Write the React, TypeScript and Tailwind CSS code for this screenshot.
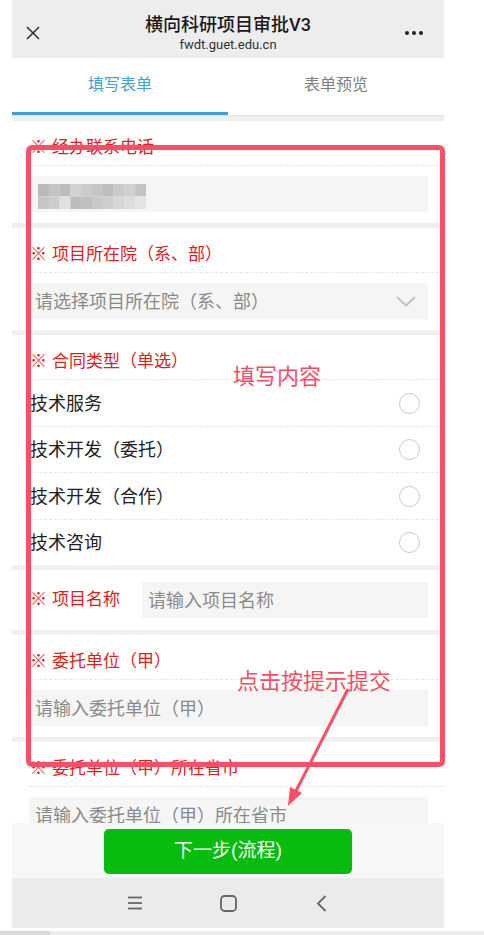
import React from "react";

const FONT = "font-['Roboto','Noto_Sans_CJK_SC',sans-serif]";

function Label({ children }: { children: React.ReactNode }) {
  return (
    <div className="pl-[18px] h-[44px] pt-[9px] leading-[34px] text-[17px] text-[#d5231d]">
      <span className="mr-[5px]">※</span>
      {children}
    </div>
  );
}

function InputBox({ placeholder, children, chevron }: { placeholder?: string; children?: React.ReactNode; chevron?: boolean }) {
  return (
    <div className="relative h-[36px] bg-[#f5f5f5] flex items-center pl-[6px] text-[18px] text-[#8a8a8a]">
      {placeholder}
      {children}
      {chevron && (
        <svg className="absolute right-[12px] top-[13px]" width="20" height="11" viewBox="0 0 20 11">
          <polyline points="1,1 10,9.5 19,1" fill="none" stroke="#c2c2c2" strokeWidth="2" />
        </svg>
      )}
    </div>
  );
}

function Section({ label, placeholder, chevron, children }: { label: string; placeholder?: string; chevron?: boolean; children?: React.ReactNode }) {
  return (
    <div className="bg-white">
      <Label>{label}</Label>
      <div className="ml-[17px] border-t border-dashed border-[#e8e8e8] pt-[10px] pb-[11px] pr-[16px]">
        <InputBox placeholder={placeholder} chevron={chevron}>
          {children}
        </InputBox>
      </div>
    </div>
  );
}

function Pixelated() {
  const r1 = ["#b9b9b9", "#c4c4c4", "#bcbcbc", "#d2d2d2", "#cbcbcb", "#c5c5c5", "#bdbdbd", "#cacaca", "#d0d0d0", "#c3c3c3"];
  const r2 = ["#c6c6c6", "#cdcdcd", "#e0e0e0", "#bcbcbc", "#c0c0c0", "#c8c8c8", "#cecece", "#d6d6d6", "#dcdcdc", "#e4e4e4"];
  return (
    <svg className="absolute left-[9px] top-[8px]" width="108" height="25" viewBox="0 0 108 25">
      {r1.map((c, i) => (
        <rect key={"a" + i} x={i * 10.8} y={0} width={10.9} height={12.5} fill={c} />
      ))}
      {r2.map((c, i) => (
        <rect key={"b" + i} x={i * 10.8} y={12.5} width={10.9} height={12.5} fill={c} />
      ))}
    </svg>
  );
}

function OptionRow({ text, short }: { text: string; short?: boolean }) {
  return (
    <div
      className={
        short
          ? "ml-[17px] border-t border-dashed border-[#e8e8e8] h-[46px] flex items-center justify-between pl-[1px] pr-[24px]"
          : "ml-[17px] border-t border-dashed border-[#e8e8e8] h-[47px] flex items-center justify-between pl-[1px] pr-[24px]"
      }
    >
      <span className="text-[18px] text-[#1f1f1f]">{text}</span>
      <span className="w-[21px] h-[21px] rounded-full border border-[#c8c8c8] bg-white" />
    </div>
  );
}

export default function App() {
  return (
    <div className={`relative w-[484px] h-[935px] bg-white overflow-hidden ${FONT}`}>
      <div className="ml-[12px] w-[432px] h-[928px] flex flex-col">
        {/* Header */}
        <div className="h-[58px] bg-[#ededed] flex shrink-0">
          <div className="w-[60px] pl-[14px] pt-[26px]">
            <svg width="14" height="14" viewBox="0 0 14 14">
              <line x1="1" y1="1" x2="13" y2="13" stroke="#333" strokeWidth="1.6" />
              <line x1="13" y1="1" x2="1" y2="13" stroke="#333" strokeWidth="1.6" />
            </svg>
          </div>
          <div className="flex-1 flex flex-col items-center pt-[13px]">
            <div className="text-[18px] leading-[24px] font-medium text-[#1a1a1a]">横向科研项目审批V3</div>
            <div className="text-[13px] leading-[16px] text-[#333]">fwdt.guet.edu.cn</div>
          </div>
          <div className="w-[60px] flex justify-end pr-[20px] pt-[30px]">
            <svg width="20" height="6" viewBox="0 0 20 6">
              <circle cx="3" cy="3" r="2" fill="#222" />
              <circle cx="10" cy="3" r="2" fill="#222" />
              <circle cx="17" cy="3" r="2" fill="#222" />
            </svg>
          </div>
        </div>

        {/* Tabs */}
        <div className="bg-white shrink-0">
          <div className="h-[54px] flex">
            <div className="flex-1 flex items-center justify-center text-[16px] text-[#3ea4d8]">填写表单</div>
            <div className="flex-1 flex items-center justify-center text-[16px] text-[#7d7d7d]">表单预览</div>
          </div>
          <div className="h-[3px] flex">
            <div className="w-1/2 bg-[#3c9fda]" />
          </div>
          <div className="h-[1px] bg-[#e3e3e3]" />
        </div>

        {/* Content */}
        <div className="h-[707px] overflow-hidden bg-[#efeff4] pt-[5px] flex flex-col gap-[5px] shrink-0">
          <Section label="经办联系电话">
            <Pixelated />
          </Section>
          <Section label="项目所在院（系、部）" placeholder="请选择项目所在院（系、部）" chevron />
          <div className="bg-white">
            <Label>合同类型（单选）</Label>
            <OptionRow text="技术服务" />
            <OptionRow text="技术开发（委托）" short />
            <OptionRow text="技术开发（合作）" />
            <OptionRow text="技术咨询" short />
          </div>
          <div className="bg-white flex items-center py-[12px] pr-[16px]">
            <div className="w-[130px] pl-[18px] text-[17px] text-[#d5231d]">
              <span className="mr-[5px]">※</span>项目名称
            </div>
            <div className="flex-1">
              <InputBox placeholder="请输入项目名称" />
            </div>
          </div>
          <Section label="委托单位（甲）" placeholder="请输入委托单位（甲）" />
          <Section label="委托单位（甲）所在省市" placeholder="请输入委托单位（甲）所在省市" />
        </div>

        {/* Button bar */}
        <div className="h-[55px] bg-[#f7f7f7] flex justify-center pt-[6px] shrink-0">
          <div className="w-[248px] h-[45px] rounded-[5px] bg-[#07bc0c] flex items-center justify-center text-white text-[19px]">
            下一步(流程)
          </div>
        </div>

        {/* Nav bar */}
        <div className="h-[50px] bg-[#ebebeb] flex justify-center items-center shrink-0">
          <div className="w-[93px] flex justify-center">
            <svg width="16" height="14" viewBox="0 0 16 14">
              <line x1="1" y1="1.5" x2="15" y2="1.5" stroke="#666" strokeWidth="1.8" />
              <line x1="1" y1="7" x2="15" y2="7" stroke="#666" strokeWidth="1.8" />
              <line x1="1" y1="12.5" x2="15" y2="12.5" stroke="#666" strokeWidth="1.8" />
            </svg>
          </div>
          <div className="w-[93px] flex justify-center">
            <svg width="17" height="17" viewBox="0 0 17 17">
              <rect x="1" y="1" width="15" height="15" rx="3.5" fill="none" stroke="#666" strokeWidth="1.8" />
            </svg>
          </div>
          <div className="w-[93px] flex justify-center">
            <svg width="11" height="17" viewBox="0 0 11 17">
              <polyline points="9.5,1 2,8.5 9.5,16" fill="none" stroke="#666" strokeWidth="1.8" />
            </svg>
          </div>
        </div>
      </div>

      {/* Scroll strip */}
      <div className="mt-[3px] h-[4px] flex bg-[#ececec]">
        <div className="w-[50px] bg-[#d8d8d8]" />
      </div>

      {/* Annotation overlays */}
      <div className="absolute left-[26px] top-[145px] w-[419px] h-[622px] border-[5px] border-[#fc4f66] rounded-[6px] pointer-events-none" />
      <div className="absolute left-[233px] top-[362px] text-[22px] leading-[30px] text-[#f84c62]">填写内容</div>
      <div className="absolute left-[237px] top-[667px] text-[22px] leading-[30px] text-[#f84c62]">点击按提示提交</div>
      <svg className="absolute left-0 top-0 pointer-events-none" width="484" height="935" viewBox="0 0 484 935">
        <line x1="348" y1="689" x2="296" y2="791" stroke="#fc4f66" strokeWidth="3" />
        <polygon points="288,806 302,793 290,787" fill="#fc4f66" />
      </svg>
    </div>
  );
}
